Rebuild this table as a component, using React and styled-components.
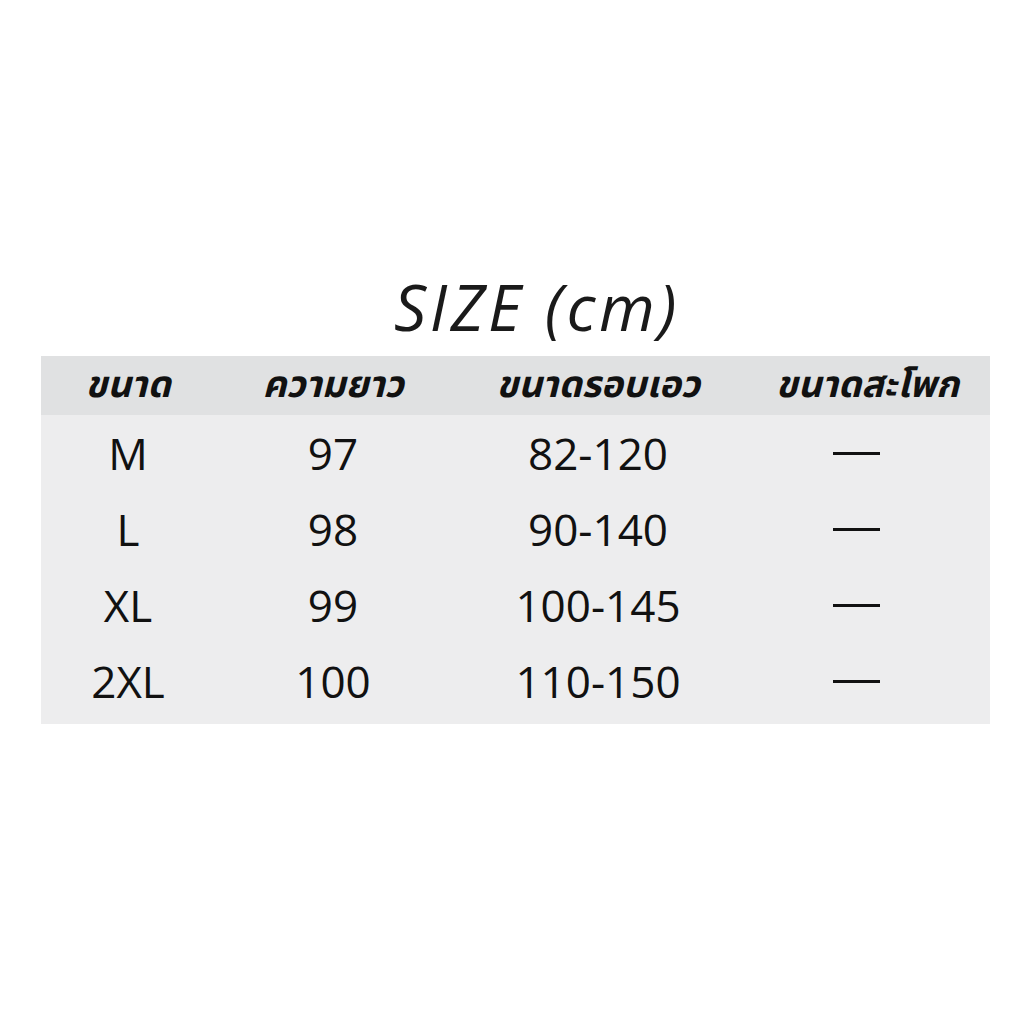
import React from "react";
import styled, { createGlobalStyle } from "styled-components";

const Global = createGlobalStyle`
  html, body { margin: 0; padding: 0; background: #ffffff; }
  body { font-family: "Open Sans", "Noto Sans Thai", "Noto Sans", sans-serif; color: #111; }
`;

const Page = styled.div`
  width: 1024px;
  height: 1024px;
  display: flex;
  flex-direction: column;
  align-items: center;
  padding-top: 262px;
  box-sizing: border-box;
`;

const Title = styled.h1`
  margin: 0 0 0 50px;
  font-family: "Open Sans", sans-serif;
  font-style: italic;
  font-weight: 500;
  font-size: 64px;
  line-height: 90px;
  color: #1a1a1a;
  letter-spacing: 3.5px;
`;

const Table = styled.div`
  margin-top: 4px;
  width: 949px;
  margin-left: 7px;
  display: grid;
  grid-template-columns: 174px 236px 294px 245px;
`;

const HeadCell = styled.div`
  background: #e0e1e2;
  height: 59px;
  display: flex;
  align-items: center;
  justify-content: center;
  font-family: "Noto Sans Thai", "Loma", "Noto Sans", sans-serif;
  font-style: italic;
  font-weight: 700;
  font-size: 37px;
  color: #111;
`;

const Body = styled.div`
  grid-column: 1 / -1;
  background: #ededee;
  padding-bottom: 5px;
  display: grid;
  grid-template-columns: 174px 236px 294px 245px;
`;

const Cell = styled.div`
  height: 76px;
  display: flex;
  align-items: center;
  justify-content: center;
  font-family: "Open Sans", sans-serif;
  font-size: 44px;
  color: #111;
`;

const Dash = styled.span`
  display: block;
  width: 47px;
  height: 3px;
  background: #111;
  margin-left: -22px;
`;

const rows = [
  ["M", "97", "82-120"],
  ["L", "98", "90-140"],
  ["XL", "99", "100-145"],
  ["2XL", "100", "110-150"],
];

export default function App() {
  return (
    <>
      <Global />
      <Page>
        <Title>SIZE (cm)</Title>
        <Table>
          <HeadCell>ขนาด</HeadCell>
          <HeadCell>ความยาว</HeadCell>
          <HeadCell>ขนาดรอบเอว</HeadCell>
          <HeadCell>ขนาดสะโพก</HeadCell>
          <Body>
            {rows.map((r) => (
              <React.Fragment key={r[0]}>
                <Cell>{r[0]}</Cell>
                <Cell>{r[1]}</Cell>
                <Cell>{r[2]}</Cell>
                <Cell><Dash /></Cell>
              </React.Fragment>
            ))}
          </Body>
        </Table>
      </Page>
    </>
  );
}
